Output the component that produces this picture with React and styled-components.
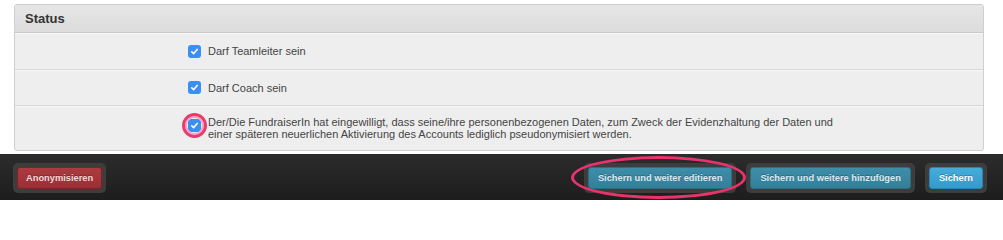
import React from 'react';
import styled, { createGlobalStyle } from 'styled-components';

const GlobalStyle = createGlobalStyle`
  html, body {
    margin: 0;
    padding: 0;
    background: #ffffff;
    font-family: "Liberation Sans", Arial, sans-serif;
  }
`;

const Page = styled.div`
  width: 1003px;
  height: 200px;
  overflow: hidden;
  display: flex;
  flex-direction: column;
`;

const Panel = styled.section`
  margin: 4px 19px 0 14px;
  border: 1px solid #cfcfcf;
  border-radius: 3px;
  background: #eeeeee;
  overflow: hidden;
`;

const PanelHeader = styled.h2`
  margin: 0;
  height: 27px;
  padding: 0 10px;
  display: flex;
  align-items: center;
  font-size: 13px;
  font-weight: 700;
  color: #333333;
  background: linear-gradient(#e6e6e6, #dcdcdc);
  border-bottom: 1px solid #c8c8c8;
`;

const Row = styled.div`
  display: grid;
  grid-template-columns: 166px 13px 1fr;
  column-gap: 7px;
  align-items: ${(p) => (p.$multi ? 'start' : 'center')};
  height: ${(p) => p.$height}px;
  padding: ${(p) => (p.$multi ? '10px 0 0' : '0')};
  box-sizing: border-box;
  border-top: ${(p) => (p.$first ? 'none' : '1px solid #d6d6d6')};
  box-shadow: inset 0 1px 0 #f8f8f8;
`;

const Box = styled.span`
  position: relative;
  grid-column: 2;
  width: 13px;
  height: 13px;
  border-radius: 3px;
  background: #3b8ff3;
  display: flex;
  align-items: center;
  justify-content: center;
  margin-top: ${(p) => (p.$multi ? '3px' : '0')};
`;

const Highlight = styled.span`
  position: absolute;
  left: -6px;
  top: -6px;
  width: 25px;
  height: 25px;
  border-radius: 50%;
  border: 3px solid #ea3a6e;
  box-shadow: inset 0 0 0 2px #f5a8c0;
  box-sizing: border-box;
`;

const Label = styled.span`
  font-size: 11px;
  line-height: 12px;
  color: #444444;
  max-width: 630px;
`;

const ActionBar = styled.div`
  margin-top: 3px;
  flex: 1;
  background: linear-gradient(#2c2c2c, #1d1d1d);
  display: flex;
  align-items: flex-start;
  padding: 9px 16px 0 13px;
  gap: 10px;
`;

const Spacer = styled.div`
  flex: 1;
`;

const Well = styled.div`
  position: relative;
  padding: 4px;
  border-radius: 5px;
  background: #3d3d3d;
`;

const Button = styled.button`
  height: 22px;
  padding: 0 ${(p) => p.$pad || 9}px;
  border-radius: 3px;
  border: 1px solid ${(p) => p.$border};
  background: ${(p) => p.$bg};
  color: ${(p) => p.$color};
  font-family: "Liberation Sans", Arial, sans-serif;
  font-size: 9.3px;
  font-weight: 700;
  text-shadow: 0 -1px 0 rgba(0, 0, 0, 0.25);
  cursor: pointer;
  display: flex;
  align-items: center;
`;

const Ring = styled.span`
  position: absolute;
  left: -13px;
  right: -10px;
  top: -7px;
  bottom: -6px;
  border: 3px solid #e8336c;
  border-radius: 50%;
  pointer-events: none;
`;

function Check({ multi, marked }) {
  return (
    <Box $multi={multi}>
      <svg width="9" height="9" viewBox="0 0 9 9">
        <path
          d="M1.8 4.8 L3.7 6.6 L7.2 2.4"
          fill="none"
          stroke="#ffffff"
          strokeWidth="1.6"
          strokeLinecap="round"
          strokeLinejoin="round"
        />
      </svg>
      {marked && <Highlight />}
    </Box>
  );
}

const red = { $bg: 'linear-gradient(#ad3b40, #9a2f35)', $border: '#7d2328', $color: '#f3dada' };
const teal = { $bg: 'linear-gradient(#3e8ea9, #337f99)', $border: '#2a6d84', $color: '#dfe9ee' };
const blue = { $bg: 'linear-gradient(#44addb, #349acb)', $border: '#2a86b4', $color: '#ffffff' };

export default function App() {
  return (
    <Page>
      <GlobalStyle />
      <Panel>
        <PanelHeader>Status</PanelHeader>
        <Row $height={36} $first>
          <Check />
          <Label>Darf Teamleiter sein</Label>
        </Row>
        <Row $height={36}>
          <Check />
          <Label>Darf Coach sein</Label>
        </Row>
        <Row $height={45} $multi>
          <Check multi marked />
          <Label>
            Der/Die FundraiserIn hat eingewilligt, dass seine/ihre personenbezogenen Daten, zum Zweck der
            Evidenzhaltung der Daten und einer späteren neuerlichen Aktivierung des Accounts lediglich
            pseudonymisiert werden.
          </Label>
        </Row>
      </Panel>
      <ActionBar>
        <Well>
          <Button {...red} $pad={8}>Anonymisieren</Button>
        </Well>
        <Spacer />
        <Well>
          <Button {...teal}>Sichern und weiter editieren</Button>
          <Ring />
        </Well>
        <Well>
          <Button {...teal}>Sichern und weitere hinzufügen</Button>
        </Well>
        <Well>
          <Button {...blue}>Sichern</Button>
        </Well>
      </ActionBar>
    </Page>
  );
}
